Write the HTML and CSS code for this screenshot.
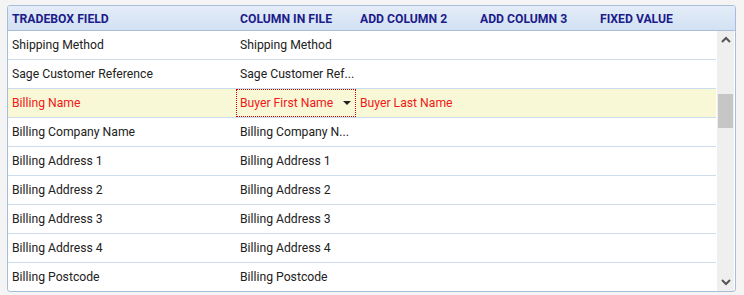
FILE: index.html
```html
<!DOCTYPE html>
<html lang="en">
<head>
    <meta charset="UTF-8">
    <title>Field Mapping</title>
    <link rel="stylesheet" href="styles.css">
</head>
<body>
    <div class="grid">
        <div class="grid-header">
            <div class="cell col-field">TRADEBOX FIELD</div>
            <div class="cell">COLUMN IN FILE</div>
            <div class="cell">ADD COLUMN 2</div>
            <div class="cell">ADD COLUMN 3</div>
            <div class="cell">FIXED VALUE</div>
        </div>
        <div class="grid-body">
            <div class="rows">
                <div class="row">
                    <div class="cell col-field">Shipping Method</div>
                    <div class="cell">Shipping Method</div>
                    <div class="cell"></div><div class="cell"></div><div class="cell"></div>
                </div>
                <div class="row">
                    <div class="cell col-field">Sage Customer Reference</div>
                    <div class="cell">Sage Customer Ref...</div>
                    <div class="cell"></div><div class="cell"></div><div class="cell"></div>
                </div>
                <div class="row selected">
                    <div class="cell col-field">Billing Name</div>
                    <div class="cell editing">
                        <div class="select">
                            <span>Buyer First Name</span>
                            <span class="caret"></span>
                        </div>
                    </div>
                    <div class="cell">Buyer Last Name</div>
                    <div class="cell"></div><div class="cell"></div>
                </div>
                <div class="row">
                    <div class="cell col-field">Billing Company Name</div>
                    <div class="cell">Billing Company N...</div>
                    <div class="cell"></div><div class="cell"></div><div class="cell"></div>
                </div>
                <div class="row">
                    <div class="cell col-field">Billing Address 1</div>
                    <div class="cell">Billing Address 1</div>
                    <div class="cell"></div><div class="cell"></div><div class="cell"></div>
                </div>
                <div class="row">
                    <div class="cell col-field">Billing Address 2</div>
                    <div class="cell">Billing Address 2</div>
                    <div class="cell"></div><div class="cell"></div><div class="cell"></div>
                </div>
                <div class="row">
                    <div class="cell col-field">Billing Address 3</div>
                    <div class="cell">Billing Address 3</div>
                    <div class="cell"></div><div class="cell"></div><div class="cell"></div>
                </div>
                <div class="row">
                    <div class="cell col-field">Billing Address 4</div>
                    <div class="cell">Billing Address 4</div>
                    <div class="cell"></div><div class="cell"></div><div class="cell"></div>
                </div>
                <div class="row">
                    <div class="cell col-field">Billing Postcode</div>
                    <div class="cell">Billing Postcode</div>
                    <div class="cell"></div><div class="cell"></div><div class="cell"></div>
                </div>
            </div>
            <div class="scrollbar">
                <svg class="arrow" width="10" height="7" viewBox="0 0 10 7"><path d="M1 6 L5 2 L9 6" fill="none" stroke="#555" stroke-width="2"/></svg>
                <div class="track"><div class="thumb"></div></div>
                <svg class="arrow" width="10" height="7" viewBox="0 0 10 7"><path d="M1 1 L5 5 L9 1" fill="none" stroke="#555" stroke-width="2"/></svg>
            </div>
        </div>
    </div>
</body>
</html>
```

FILE: styles.css
```css
body {
    font-family: Roboto, "Liberation Sans", Arial, sans-serif;
    font-size: 12.2px;
    margin: 0;
    padding: 5px 8px 0 7px;
    background-color: #f4f4f4;
    color: #222;
}
.grid {
    width: 727px;
    border: 1px solid #a9bdd8;
    border-radius: 3px;
    background: #fff;
    overflow: hidden;
}
.grid-header {
    display: flex;
    height: 25px;
    padding-top: 1px;
    box-sizing: border-box;
    align-items: center;
    background: linear-gradient(to bottom, #e4edf8, #d2e1f3);
    border-bottom: 1px solid #a9bdd8;
    color: #1c1c8a;
    font-weight: bold;
}
.cell {
    width: 120px;
    padding-left: 4px;
    box-sizing: border-box;
    white-space: nowrap;
    overflow: hidden;
}
.cell.col-field {
    width: 228px;
}
.grid-body {
    display: flex;
    height: 260px;
}
.rows {
    width: 708px;
    overflow: hidden;
}
.row {
    display: flex;
    align-items: center;
    height: 28px;
    border-bottom: 1px solid #cddcec;
}
.row.selected {
    background: #f8f8d6;
    color: #f01818;
}
.cell.editing {
    height: 100%;
    padding: 0;
}
.select {
    display: flex;
    align-items: center;
    justify-content: space-between;
    height: 100%;
    box-sizing: border-box;
    border: 1px dotted #d00000;
    padding: 0 4px 0 3px;
}
.caret {
    width: 0;
    height: 0;
    border-left: 4px solid transparent;
    border-right: 4px solid transparent;
    border-top: 4px solid #222;
}
.scrollbar {
    width: 17px;
    margin-left: 1px;
    background: #efefef;
    display: flex;
    flex-direction: column;
    align-items: center;
}
.arrow {
    margin: 5px 0;
}
.track {
    flex: 1;
    width: 100%;
}
.thumb {
    margin: 46px 0 0 1px;
    width: 15px;
    height: 34px;
    background: #c6c6c6;
}
```
